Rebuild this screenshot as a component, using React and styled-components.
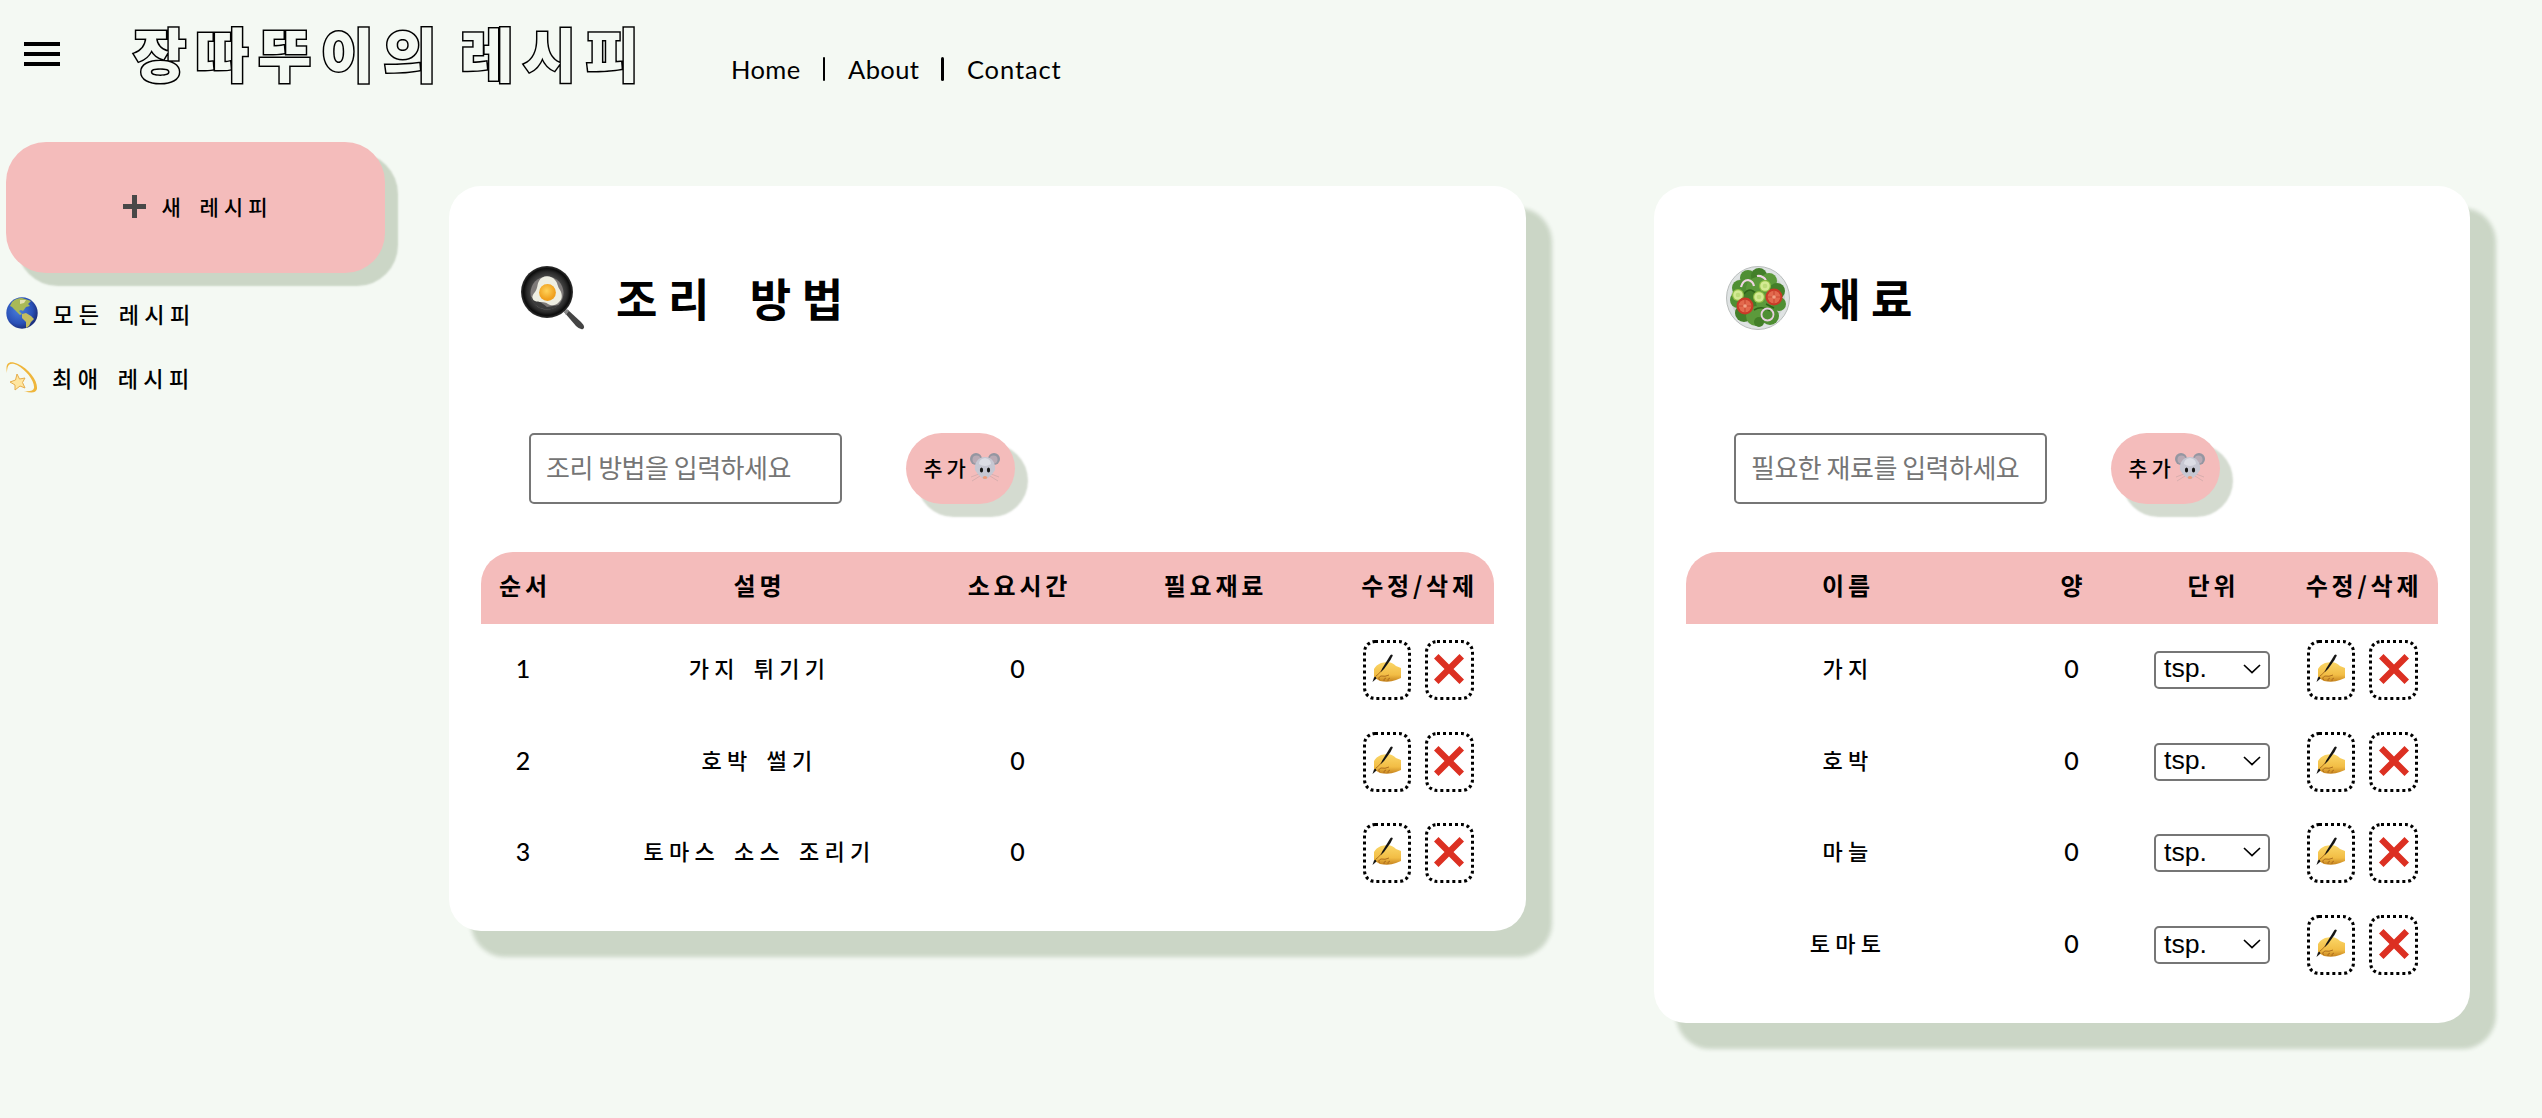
import React from "react";
import styled, { createGlobalStyle } from "styled-components";

const GlobalStyle = createGlobalStyle`
  *, *::before, *::after { box-sizing: border-box; }
  body {
    margin: 0;
    min-height: 1118px;
    background: #f4f9f3;
    color: #000;
    font-family: "Noto Sans CJK KR", sans-serif;
    font-size: 24px;
    letter-spacing: 4.4px;
  }
  svg { display: block; flex: none; }
`;

const PINK = "#f4bcbb";
const SHADE = "rgba(40, 75, 20, 0.2)";

const Header = styled.header`
  display: flex;
  align-items: flex-start;
  height: 142px;
  padding-left: 18px;
`;

const MenuButton = styled.button`
  width: 48px;
  height: 48px;
  margin-top: 30px;
  padding: 0;
  border: 0;
  background: none;
`;

const Title = styled.h1`
  width: 594px;
  margin: 10px 0 0 67px;
  color: #f4f9f3;
  font-size: 58px;
  font-weight: 900;
  line-height: 84px;
  letter-spacing: 9.2px;
  word-spacing: -8px;
  white-space: nowrap;
  -webkit-text-stroke: 3px #000;
  paint-order: stroke fill;
`;

const Nav = styled.nav`
  display: flex;
  margin: 54px 0 0 4px;
  font-family: Lato, sans-serif;
  font-size: 25.5px;
  line-height: 30px;
`;

const NavLink = styled.a`
  letter-spacing: ${(p) => p.$spacing || 0.4}px;
`;

const Divider = styled.span`
  width: 2.5px;
  height: 24px;
  margin: 3px 23px 0 22px;
  border-radius: 2px;
  background: #000;
`;

const Main = styled.main`
  display: flex;
  align-items: flex-start;
  padding-left: 6px;
`;

const Sidebar = styled.aside`
  width: 443px;
`;

const NewRecipe = styled.button`
  display: flex;
  align-items: center;
  justify-content: center;
  gap: 15px;
  width: 379px;
  height: 131px;
  padding: 0 0 3px 5px;
  border: 0;
  border-radius: 40px;
  background: ${PINK};
  box-shadow: 12px 12px 2px 1px ${SHADE};
  color: #000;
  font: 500 21px "Noto Sans CJK KR", sans-serif;
  letter-spacing: 5px;
  word-spacing: 4px;
`;

const SideLinks = styled.nav`
  padding-top: 8px;
`;

const SideLink = styled.a`
  display: flex;
  align-items: center;
  gap: ${(p) => p.$gap}px;
  height: 64px;
  font-size: 22px;
  font-weight: 500;
  letter-spacing: 5.4px;
  word-spacing: 4px;
`;

const Card = styled.section`
  width: ${(p) => p.$width}px;
  margin: 44px ${(p) => p.$after || 0}px 0 0;
  padding: 72px 32px 32px;
  border-radius: 32px;
  background: #fff;
  box-shadow: 24px 24px 4px 2px ${SHADE};
`;

const CardTitle = styled.h2`
  display: flex;
  align-items: center;
  gap: ${(p) => p.$gap}px;
  height: 80px;
  margin: 0 0 95px 40px;
  font-size: 45px;
  font-weight: 700;
  line-height: 80px;
  letter-spacing: 10.6px;
  word-spacing: 9px;
`;

const Form = styled.form`
  display: flex;
  gap: 64px;
  height: 71px;
  margin: 0 0 48px 48px;
`;

const Input = styled.input`
  width: 313px;
  padding: 0 0 5px 15px;
  border: 2px solid #767676;
  border-radius: 5px;
  background: #fff;
  font-family: "Noto Sans CJK KR", sans-serif;
  font-size: 26px;
  letter-spacing: -0.5px;
  &::placeholder { color: #757575; opacity: 1; }
`;

const AddButton = styled.button`
  display: flex;
  align-items: center;
  justify-content: center;
  width: 109px;
  padding: 0 0 3px 2px;
  border: 0;
  border-radius: 40px;
  background: ${PINK};
  box-shadow: 12px 12px 2px 1px ${SHADE};
  color: #000;
  font: 500 21px "Noto Sans CJK KR", sans-serif;
  letter-spacing: 4px;
`;

const Row = styled.div`
  display: grid;
  grid-template-columns: ${(p) => p.$columns};
  align-items: center;
  justify-items: center;
  height: 91.75px;
  font-weight: 500;
  font-size: 22px;
  letter-spacing: 5.2px;
  word-spacing: 4px;
`;

const HeadRow = styled(Row)`
  height: 72px;
  padding-bottom: 7px;
  border-radius: 32px 32px 0 0;
  background: ${PINK};
  font-size: 24px;
  font-weight: 700;
  letter-spacing: 3.8px;
`;

const Cell = styled.div`
  padding: 0 0 ${(p) => (p.$text ? 6 : 0)}px 3px;
  white-space: nowrap;
`;

const NumberCell = styled(Cell)`
  padding: 0 0 4px 4px;
  font: 500 25px Lato, sans-serif;
`;

const Actions = styled.div`
  display: flex;
  gap: 14px;
`;

const IconButton = styled.button`
  display: flex;
  align-items: flex-start;
  justify-content: center;
  width: ${(p) => p.$width}px;
  height: 60px;
  padding: 11px 0 0;
  border: 3px dotted #000;
  border-radius: 12px;
  background: #fff;
`;

const Select = styled.div`
  display: flex;
  align-items: center;
  justify-content: space-between;
  width: 116px;
  height: 38px;
  padding: 0 7px 2px 8px;
  border: 2px solid #767676;
  border-radius: 5px;
  font: 400 26.67px "Liberation Sans", sans-serif;
  letter-spacing: 0;
`;

const MenuIcon = () => (
  <svg width="48" height="48" viewBox="0 0 24 24">
    <path d="M3 18h18v-2H3v2zm0-5h18v-2H3v2zm0-7v2h18V6H3z" />
  </svg>
);

const PlusIcon = () => (
  <svg width="23" height="23" viewBox="0 0 23 23">
    <path d="M9 0h5v9h9v5h-9v9H9v-9H0V9h9z" fill="#484848" />
  </svg>
);

const GlobeIcon = () => (
  <svg width="32" height="32" viewBox="0 0 32 32">
    <defs>
      <radialGradient id="sea" cx="0.4" cy="0.4" r="0.62">
        <stop offset="0" stopColor="#4a80dc" />
        <stop offset="0.7" stopColor="#2a51b8" />
        <stop offset="1" stopColor="#1c2f7c" />
      </radialGradient>
    </defs>
    <circle cx="16" cy="16" r="15.7" fill="url(#sea)" />
    <path d="M6 5Q10 1 16 1L25 4L22 7L24 9L20 10L17 14L15 13L13 14L16 17L14 18L9 13L6 10L4 9Z" fill="#a9b957" />
    <path d="M16 17L20 16L25 19L28 22L25 25L23 29L20 31L20 25L16 21Z" fill="#c3bd60" />
    <path d="M14 3L20 3L18 6L14 7Z" fill="#e4e2b0" />
  </svg>
);

const DizzyIcon = () => (
  <svg width="32" height="32" viewBox="0 0 32 32">
    <path d="M1 12C-1 2 3-1 12 3C23 8 32 20 31 28Q29 34 18 30Q27 31 28 27C29 20 20 9 11 4C4 1 1 3 1 12Z" fill="#efb63b" />
    <path d="M11 13L13.500 18L19 17L16.500 21.500L19 27L14 25L9 29L9 24L4 21L9.500 19Z" fill="#ffe6a0" stroke="#e6ad4b" strokeWidth="1" strokeLinejoin="round" />
  </svg>
);

const PanIcon = () => (
  <svg width="64" height="64" viewBox="0 0 64 64">
    <defs>
      <radialGradient id="pan">
        <stop offset="0.55" stopColor="#4c4c4c" />
        <stop offset="0.78" stopColor="#2a2a2a" />
        <stop offset="0.9" stopColor="#0c0c0c" />
        <stop offset="1" stopColor="#333" />
      </radialGradient>
      <radialGradient id="yolk" cx="0.45" cy="0.4">
        <stop offset="0" stopColor="#ffd35a" />
        <stop offset="1" stopColor="#f0a01e" />
      </radialGradient>
    </defs>
    <path d="M43 46L47 44L60 56Q65 61 62 63Q59 64 55 60Z" fill="#444" />
    <path d="M43 46L46 43L48 45L45 49Z" fill="#8a8a8a" />
    <circle cx="26" cy="26" r="26" fill="url(#pan)" />
    <circle cx="26" cy="27" r="16.5" fill="#7e7a79" />
    <path d="M10 31Q20 36 26 41L38 39Q31 45 23 43Q12 41 10 31Z" fill="#3c3c3c" />
    <path d="M18 15C21 9 30 9 34 14C37 17 36 20 39 24C42 29 41 34 38 36C35 40 30 40 27 38C23 35 18 37 14 35C10 33 11 29 14 26C17 22 16 18 18 15Z" fill="#eeeee2" />
    <circle cx="26.500" cy="26.500" r="8.400" fill="url(#yolk)" />
  </svg>
);

const LEAVES = [
  [22, 12, 8], [33, 10, 8], [43, 15, 8], [14, 22, 8], [51, 25, 8], [32, 23, 12],
  [12, 34, 8], [24, 36, 12], [42, 36, 12], [53, 38, 7], [18, 47, 9], [30, 50, 10], [44, 50, 9], [33, 56, 5],
];
const Tomato = ({ x, y }) => (
  <g>
    <circle cx={x} cy={y} r="8.500" fill="#c93a27" />
    <circle cx={x} cy={y} r="6.300" fill="#e3694d" />
    <path d={`M${x - 6} ${y}h12M${x} ${y - 6}v12`} stroke="#c94a33" strokeWidth="1.200" />
    <circle cx={x} cy={y} r="1.800" fill="#f2a184" />
  </g>
);
const Cucumber = ({ x, y }) => (
  <g>
    <circle cx={x} cy={y} r="6" fill="#8fbf45" />
    <circle cx={x} cy={y} r="4.800" fill="#d4ea94" />
    <circle cx={x} cy={y} r="2.300" fill="#bcdc78" />
  </g>
);
const SaladIcon = () => (
  <svg width="64" height="64" viewBox="0 0 64 64">
    <circle cx="32" cy="32" r="31.500" fill="#dfe3e3" stroke="#b9bdbc" />
    <circle cx="32" cy="32" r="27" fill="#ccd2cf" />
    {LEAVES.map(([x, y, r], i) => (
      <circle key={i} cx={x} cy={y} r={r} fill={["#4f8f33", "#437f29", "#5c9a3b"][i % 3]} />
    ))}
    <path d="M18 28Q24 20 30 28M28 44Q36 39 44 45M12 30L22 36M40 12L36 22M48 42L40 38" fill="none" stroke="#2f6519" strokeWidth="1.500" />
    <path d="M15 21Q17 14 22 14Q27 15 28 20M31 10Q36 9 40 14" fill="none" stroke="#efd3e2" strokeWidth="2.200" />
    <Cucumber x={39} y={20} />
    <Cucumber x={12} y={29} />
    <Cucumber x={33} y={31} />
    <Tomato x={48} y={31} />
    <Tomato x={19} y={40} />
    <circle cx="41.500" cy="48.500" r="6" fill="none" stroke="#e9cfe0" strokeWidth="1.800" />
  </svg>
);

const MouseIcon = () => (
  <svg width="30" height="30" viewBox="0 0 30 30">
    <circle cx="6" cy="7" r="6" fill="#9496a1" />
    <circle cx="24" cy="7" r="6" fill="#9496a1" />
    <circle cx="6.500" cy="7.500" r="4" fill="#b9aab4" />
    <circle cx="23.500" cy="7.500" r="4" fill="#b9aab4" />
    <path d="M1 25L9 22M2 29L10 24M29 25L21 22M28 29L20 24" stroke="#d0a9aa" strokeWidth="0.800" />
    <path d="M15 5C22 5 26 11 25 18Q23 22 18 26Q15 29 12 26Q7 22 5 18C4 11 8 5 15 5Z" fill="#c6c7d2" />
    <path d="M15 6Q21 7 21 12Q15 16 9 12Q9 7 15 6Z" fill="#dcdde5" />
    <ellipse cx="11.500" cy="18" rx="1.600" ry="2.500" fill="#151515" />
    <ellipse cx="18.500" cy="18" rx="1.600" ry="2.500" fill="#151515" />
    <ellipse cx="15" cy="25.500" rx="2.200" ry="1.500" fill="#ee9a78" />
  </svg>
);

const WriteIcon = () => (
  <svg width="30" height="30" viewBox="0 0 30 30">
    <defs>
      <linearGradient id="hand" x1="0" y1="0" x2="0" y2="1">
        <stop offset="0" stopColor="#fbd768" />
        <stop offset="0.65" stopColor="#f2bd45" />
        <stop offset="1" stopColor="#c5821d" />
      </linearGradient>
    </defs>
    <path d="M2 15Q4 11 9 9L15 8Q20 8 24 12L29 14V24L24 26Q17 29 8 27Q4 25 2 23Z" fill="url(#hand)" />
    <path d="M8 26Q5 24 9 22Q13 23 17 21M12 27Q11 25 14 24M16 27Q15 25 18 24" fill="none" stroke="#a9691b" strokeWidth="0.900" />
    <path d="M4 22Q7 20 9 17Q11 14 14 11" fill="none" stroke="#b0721c" strokeWidth="1" />
    <path d="M18.500 1Q20 0 20.800 1.500L18.500 6L12 15L8.500 18.500L10.500 14Z" fill="#151515" />
    <path d="M0.500 28L2 23.500L3.500 22.500L4.500 24.500Z" fill="#151515" />
  </svg>
);

const CrossIcon = () => (
  <svg width="30" height="30" viewBox="0 0 30 30">
    <path d="M0 4.500L4.500 0L15 10.500L25.500 0L30 4.500L19.500 15L30 25.500L25.500 30L15 19.500L4.500 30L0 25.500L10.500 15Z" fill="#dc3022" />
  </svg>
);

const Chevron = () => (
  <svg width="18" height="10" viewBox="0 0 18 10">
    <path d="M1 1L9 8.500L17 1" fill="none" stroke="#000" strokeWidth="1.700" />
  </svg>
);

const RowActions = () => (
  <Actions>
    <IconButton $width={48} aria-label="edit"><WriteIcon /></IconButton>
    <IconButton $width={49} aria-label="delete"><CrossIcon /></IconButton>
  </Actions>
);

const STEP_COLUMNS = "85px 384px 136px 256px 152px";
const FOOD_COLUMNS = "321px 130px 150px 151px";
const steps = ["가지 튀기기", "호박 썰기", "토마스 소스 조리기"];
const foods = ["가지", "호박", "마늘", "토마토"];

export default function App() {
  return (
    <>
      <GlobalStyle />
      <Header>
        <MenuButton aria-label="menu"><MenuIcon /></MenuButton>
        <Title>장따뚜이의 레시피</Title>
        <Nav>
          <NavLink>Home</NavLink>
          <Divider />
          <NavLink>About</NavLink>
          <Divider />
          <NavLink $spacing={0.9}>Contact</NavLink>
        </Nav>
      </Header>
      <Main>
        <Sidebar>
          <NewRecipe><PlusIcon />새 레시피</NewRecipe>
          <SideLinks>
            <SideLink $gap={15}><GlobeIcon />모든 레시피</SideLink>
            <SideLink $gap={14}><DizzyIcon />최애 레시피</SideLink>
          </SideLinks>
        </Sidebar>
        <Card $width={1077} $after={128}>
          <CardTitle $gap={31}><PanIcon />조리 방법</CardTitle>
          <Form>
            <Input placeholder="조리 방법을 입력하세요" />
            <AddButton type="button">추가<MouseIcon /></AddButton>
          </Form>
          <HeadRow $columns={STEP_COLUMNS}>
            <Cell>순서</Cell>
            <Cell>설명</Cell>
            <Cell>소요시간</Cell>
            <Cell>필요재료</Cell>
            <Cell>수정/삭제</Cell>
          </HeadRow>
          {steps.map((name, i) => (
            <Row key={name} $columns={STEP_COLUMNS}>
              <NumberCell>{i + 1}</NumberCell>
              <Cell $text>{name}</Cell>
              <NumberCell>0</NumberCell>
              <Cell />
              <RowActions />
            </Row>
          ))}
        </Card>
        <Card $width={816}>
          <CardTitle $gap={29}><SaladIcon />재료</CardTitle>
          <Form>
            <Input placeholder="필요한 재료를 입력하세요" />
            <AddButton type="button">추가<MouseIcon /></AddButton>
          </Form>
          <HeadRow $columns={FOOD_COLUMNS}>
            <Cell>이름</Cell>
            <Cell>양</Cell>
            <Cell>단위</Cell>
            <Cell>수정/삭제</Cell>
          </HeadRow>
          {foods.map((name) => (
            <Row key={name} $columns={FOOD_COLUMNS}>
              <Cell $text>{name}</Cell>
              <NumberCell>0</NumberCell>
              <Select>tsp.<Chevron /></Select>
              <RowActions />
            </Row>
          ))}
        </Card>
      </Main>
    </>
  );
}
